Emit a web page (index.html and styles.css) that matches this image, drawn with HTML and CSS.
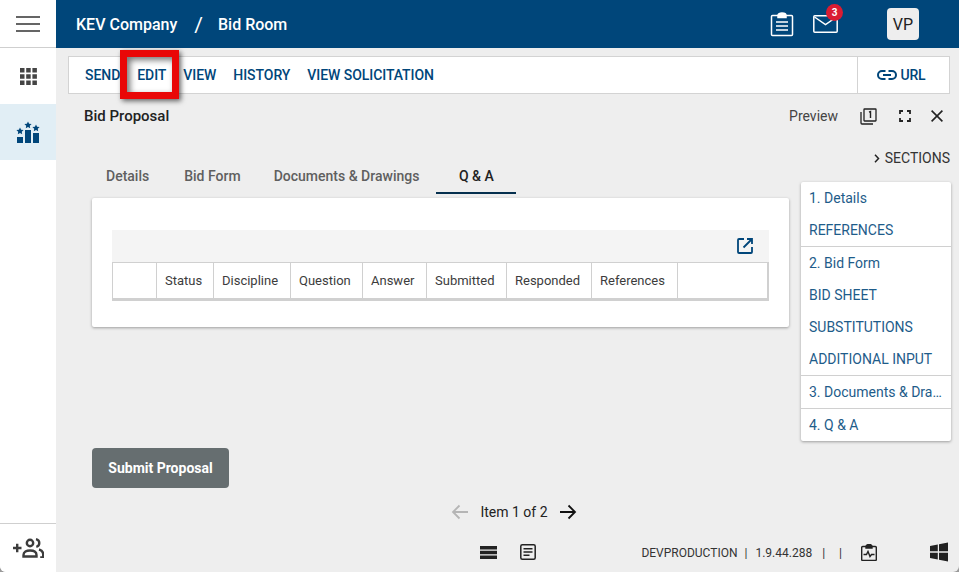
FILE: index.html
```html
<!DOCTYPE html>
<html lang="en">
<head>
<meta charset="utf-8">
<title>Bid Room</title>
<link rel="stylesheet" href="styles.css">
</head>
<body>
<div class="app">
  <aside class="rail">
    <div class="rail-menu">
      <svg class="i-burger" viewBox="0 0 24 16" width="24" height="16"><path d="M0 1h24M0 8h24M0 15h24" stroke="#333" stroke-width="1.6" fill="none"/></svg>
    </div>
    <div class="rail-apps">
      <svg viewBox="0 0 17 17" width="17" height="17" fill="#444"><path d="M0 0h4.5v4.5H0zM6.2 0h4.5v4.5H6.2zM12.4 0h4.5v4.5h-4.5zM0 6.2h4.5v4.5H0zM6.2 6.2h4.5v4.5H6.2zM12.4 6.2h4.5v4.5h-4.5zM0 12.4h4.5v4.5H0zM6.2 12.4h4.5v4.5H6.2zM12.4 12.4h4.5v4.5h-4.5z"/></svg>
    </div>
    <div class="rail-active">
      <svg viewBox="0 0 24 23" width="24" height="23" fill="#00467a"><path d="M1 16h6v6H1zM9 9h6v13H9zM17 12h6v10h-6z"/><path d="M12 .5l1.100 2.300 2.500.3-1.800 1.700.4 2.500L12 6.100 9.800 7.300l.4-2.500-1.800-1.700 2.500-.3zM4 6.500l1.100 2.300 2.500.3-1.800 1.700.4 2.500L4 12.100l-2.200 1.200.4-2.500L.4 9.100l2.500-.3zM20 3.500l1.100 2.300 2.500.3-1.800 1.700.4 2.500L20 9.100l-2.200 1.200.4-2.500-1.800-1.700 2.500-.3z"/></svg>
    </div>
    <div class="rail-fill"></div>
    <div class="rail-foot">
      <svg viewBox="0 0 31 20" width="31" height="20"><path d="M0 10h8.500M4.200 5.800v8.500" stroke="#3c3c3c" stroke-width="2.400" fill="none"/><circle cx="17" cy="5" r="3.200" fill="none" stroke="#3c3c3c" stroke-width="2.400"/><path d="M10.500 18.500v-1.500c0-3 3-4.500 6.500-4.500s6.500 1.500 6.500 4.500v1.500z" fill="none" stroke="#3c3c3c" stroke-width="2.400"/><path d="M23 1.200c2.300.5 3.300 2 3.300 3.800s-1 3.300-3 3.800M26 11.500c3 .8 4.200 2.500 4.200 5v3h-3" fill="none" stroke="#3c3c3c" stroke-width="2.400"/></svg>
    </div>
  </aside>
  <div class="main">
    <header class="topbar">
      <div class="crumbs"><span>KEV Company</span><span class="slash">/</span><span>Bid Room</span></div>
      <div class="top-icons">
        <svg class="i-clip" viewBox="0 0 24 25" width="24" height="25" fill="none" stroke="#fff" stroke-width="1.500"><path d="M8 3.500H2.500a1 1 0 0 0-1 1v18a1 1 0 0 0 1 1h19a1 1 0 0 0 1-1v-18a1 1 0 0 0-1-1H16"/><path d="M8 5.500V3.500a4 2.500 0 0 1 8 0v2z" fill="#fff"/><path d="M6 10h12M6 14h12M6 18h12"/></svg>
        <div class="mail">
          <svg viewBox="0 0 25 18" width="25" height="18" fill="none" stroke="#fff" stroke-width="1.500"><rect x=".8" y=".8" width="23.400" height="16.400" rx="1"/><path d="M1.500 2l11 7.500 11-7.500"/></svg>
          <span class="badge">3</span>
        </div>
        <div class="avatar">VP</div>
      </div>
    </header>
    <div class="content">
      <nav class="toolbar">
        <div class="tool-links">
          <a>SEND</a><a>EDIT</a><a>VIEW</a><a>HISTORY</a><a>VIEW SOLICITATION</a>
        </div>
        <div class="url-btn">
          <svg viewBox="0 0 20 10" width="20" height="10" fill="none" stroke="#00467a" stroke-width="2"><path d="M8.500 1H5a4 4 0 0 0 0 8h3.500M11.500 1H15a4 4 0 0 1 0 8h-3.500M6 5h8"/></svg>
          <span>URL</span>
        </div>
      </nav>
      <div class="title-row">
        <h1>Bid Proposal</h1>
        <div class="title-actions">
          <span class="preview">Preview</span>
          <svg viewBox="0 0 17 17" width="17" height="17" fill="none" stroke="#222" stroke-width="1.300"><rect x="4" y="1" width="12" height="12" rx=".5"/><path d="M1 4v11a1 1 0 0 0 1 1h11"/><path d="M9 4.200l1.500-.7V10" stroke-width="1.400"/></svg>
          <svg class="act-full" viewBox="0 0 12 12" width="12" height="12" fill="none" stroke="#222" stroke-width="1.800"><path d="M1 4V1h3M8 1h3v3M11 8v3H8M4 11H1V8"/></svg>
          <svg class="act-close" viewBox="0 0 12 12" width="12" height="12" fill="none" stroke="#222" stroke-width="1.600"><path d="M.6.6l10.800 10.800M11.400.6L.6 11.400"/></svg>
        </div>
      </div>
      <div class="work">
        <div class="left">
          <div class="tabs">
            <span class="tab tab-details">Details</span>
            <span class="tab tab-form">Bid Form</span>
            <span class="tab tab-docs">Documents &amp; Drawings</span>
            <span class="tab tab-qa">Q &amp; A</span>
          </div>
          <section class="card">
            <div class="grid-bar">
              <svg viewBox="0 0 16 16" width="16" height="16" fill="none" stroke="#00467a" stroke-width="1.800"><path d="M7 1H2a1 1 0 0 0-1 1v12a1 1 0 0 0 1 1h12a1 1 0 0 0 1-1V9"/><path d="M10 1h5v5M15 1L6.500 9.500"/></svg>
            </div>
            <div class="grid-head">
              <div class="cell"></div>
              <div class="cell up">Status</div>
              <div class="cell up">Discipline</div>
              <div class="cell">Question</div>
              <div class="cell">Answer</div>
              <div class="cell">Submitted</div>
              <div class="cell">Responded</div>
              <div class="cell">References</div>
              <div class="cell"></div>
            </div>
          </section>
          <button class="submit" type="button">Submit Proposal</button>
        </div>
        <div class="right">
          <div class="sec-toggle">
            <svg viewBox="0 0 6 9" width="6" height="9" fill="none" stroke="#222" stroke-width="1.500"><path d="M1 .8l3.500 3.700L1 8.200"/></svg>
            <span>SECTIONS</span>
          </div>
          <div class="sections">
            <div class="sec-group"><a>1. Details</a><a>REFERENCES</a></div>
            <div class="sec-group"><a>2. Bid Form</a><a>BID SHEET</a><a>SUBSTITUTIONS</a><a>ADDITIONAL INPUT</a></div>
            <div class="sec-group"><a>3. Documents &amp; Dra…</a></div>
            <div class="sec-group"><a>4. Q &amp; A</a></div>
          </div>
        </div>
      </div>
      <div class="pager">
        <svg viewBox="0 0 18 16" width="18" height="16" fill="none" stroke="#b5b5b5" stroke-width="1.800"><path d="M17 8H2M8.500 1.500L2 8l6.500 6.500"/></svg>
        <span>Item 1 of 2</span>
        <svg viewBox="0 0 18 16" width="18" height="16" fill="none" stroke="#111" stroke-width="1.800"><path d="M1 8h15M9.500 1.500L16 8l-6.500 6.500"/></svg>
      </div>
      <footer class="foot">
        <div class="foot-center">
          <svg viewBox="0 0 17 13" width="17" height="13" fill="#222"><path d="M0 0h17v3.500H0zM0 4.800h17v3.500H0zM0 9.500h17V13H0z"/></svg>
          <svg viewBox="0 0 16 16" width="16" height="16" fill="none" stroke="#222" stroke-width="1.500"><rect x=".8" y=".8" width="14.400" height="14.400" rx="1.500"/><path d="M3.500 4.800h9M3.500 8h9M3.500 11.200h6"/></svg>
        </div>
        <div class="foot-right">
          <span class="env">DEVPRODUCTION</span><span class="bar bar-first">|</span><span class="ver">1.9.44.288</span><span class="bar bar-mid">|</span><span class="bar bar2">|</span>
          <svg class="f-pulse" viewBox="0 0 16 17" width="16" height="17" fill="none" stroke="#222" stroke-width="1.400"><path d="M5 2.500H1.700a1 1 0 0 0-1 1v12a1 1 0 0 0 1 1h12.600a1 1 0 0 0 1-1v-12a1 1 0 0 0-1-1H11"/><path d="M5 4V2.500a3 2 0 0 1 6 0V4z" fill="#222"/><path d="M2.500 10.500h3l1.500-3 2 5 1.500-2h3"/></svg>
          <svg class="f-win" viewBox="0 0 18 20" width="18" height="20" fill="#222"><path d="M0 4l7.800-1.500V9.300H0zM9 2.200L18 .5v8.800H9zM0 10.700h7.800v6.800L0 16zM9 10.700h9v8.800l-9-1.700z"/></svg>
        </div>
      </footer>
    </div>
  </div>
</div>
<div class="highlight"></div>
</body>
</html>
```
FILE: styles.css
```css
* { box-sizing: border-box; }
html, body { margin: 0; height: 100%; }
body {
  font-family: Roboto, "Liberation Sans", sans-serif;
  background: #9a9a9a;
  overflow: hidden;
  position: relative;
}
.app {
  display: flex;
  width: 959px;
  height: 572px;
  background: #eeeeee;
  border-radius: 0 0 6px 6px;
  overflow: hidden;
}
.rail {
  width: 56px;
  flex: none;
  display: flex;
  flex-direction: column;
  background: #fff;
}
.rail-menu {
  height: 48px;
  border-bottom: 1px solid #cfcfcf;
  display: flex;
  align-items: center;
  justify-content: center;
}
.rail-apps {
  height: 56px;
  display: flex;
  align-items: center;
  justify-content: center;
}
.rail-active {
  height: 56px;
  background: #e1eef5;
  display: flex;
  align-items: center;
  justify-content: center;
}
.rail-fill { flex: 1; }
.rail-foot {
  height: 49px;
  border-top: 1px solid #cfcfcf;
  display: flex;
  align-items: center;
  justify-content: center;
}
.main {
  flex: 1;
  display: flex;
  flex-direction: column;
  min-width: 0;
}
.topbar {
  height: 48px;
  flex: none;
  background: #00467a;
  color: #fff;
  display: flex;
  align-items: center;
  justify-content: space-between;
  padding: 0 40px 0 20px;
}
.crumbs {
  display: flex;
  align-items: center;
  padding-top: 1px;
  font-size: 16px;
  font-weight: 500;
}
.slash { font-size: 21px; font-weight: 400; margin: 0 15px 0 17px; }
.top-icons { display: flex; align-items: center; }
.i-clip { margin-right: 19px; }
.mail { position: relative; display: flex; margin-right: 49px; }
.badge {
  position: absolute;
  top: -11px;
  right: -5px;
  width: 17px;
  height: 17px;
  border-radius: 50%;
  background: #da1c32;
  color: #fff;
  font-size: 10px;
  font-weight: 700;
  display: flex;
  align-items: center;
  justify-content: center;
}
.avatar {
  width: 32px;
  height: 32px;
  border-radius: 4px;
  background: #eeeeee;
  color: #222;
  font-size: 16px;
  font-weight: 400;
  display: flex;
  align-items: center;
  justify-content: center;
}
.content {
  flex: 1;
  display: flex;
  flex-direction: column;
  min-height: 0;
}
.toolbar {
  height: 38px;
  margin: 8px 9px 0 12px;
  background: #fff;
  border: 1px solid #d3d3d3;
  display: flex;
  justify-content: space-between;
  flex: none;
}
.tool-links {
  display: flex;
  align-items: center;
  gap: 17px;
  padding-left: 16px;
  font-size: 14px;
  font-weight: 500;
  letter-spacing: -.06px;
  color: #00467a;
}
.url-btn {
  width: 92px;
  padding-right: 5px;
  border-left: 1px solid #d3d3d3;
  display: flex;
  align-items: center;
  justify-content: center;
  gap: 4px;
  font-size: 14px;
  font-weight: 500;
  letter-spacing: -.2px;
  color: #00467a;
}
.title-row {
  height: 44px;
  flex: none;
  display: flex;
  align-items: center;
  justify-content: space-between;
  padding: 0 16px 0 28px;
}
h1 {
  margin: 0;
  font-size: 15px;
  font-weight: 500;
  color: #222;
}
.title-actions { display: flex; align-items: center; }
.preview { font-size: 14px; color: #444; margin-right: 22px; }
.act-full { margin-left: 22px; }
.act-close { margin-left: 20px; }
.work {
  flex: none;
  height: 346px;
  display: flex;
  padding-left: 36px;
}
.left { width: 697px; flex: none; }
.tabs {
  height: 56px;
  display: flex;
  align-items: flex-end;
  font-size: 14px;
  font-weight: 500;
  color: #5f5f5f;
}
.tab { height: 36px; padding-top: 9px; line-height: 18px; }
.tab-details { margin-left: 14px; }
.tab-form { margin-left: 35px; }
.tab-docs { margin-left: 33px; }
.tab-qa {
  margin-left: 17px;
  width: 80px;
  text-align: center;
  color: #222;
  border-bottom: 2px solid #06304f;
}
.card {
  background: #fff;
  height: 129px;
  margin-top: 4px;
  padding: 32px 20px 0;
  border-radius: 2px;
  box-shadow: 0 1px 3px rgba(0,0,0,.35);
}
.grid-bar {
  height: 32px;
  background: #f4f4f4;
  display: flex;
  align-items: center;
  justify-content: flex-end;
  padding-right: 16px;
}
.grid-head {
  display: grid;
  grid-template-columns: 44px 57px 77px 72px 64px 80px 85px 86px 1fr;
  height: 39px;
  border: 1px solid #d0d0d0;
  border-bottom: 3px solid #d0d0d0;
  border-right-width: 2px;
  font-size: 13px;
  color: #3c3c3c;
  background: #fff;
}
.cell {
  border-right: 1px solid #d0d0d0;
  display: flex;
  align-items: center;
  padding-left: 8px;
}
.cell:last-child { border-right: 0; }
.up { padding-bottom: 1px; }
.submit {
  display: block;
  width: 137px;
  height: 40px;
  margin-top: 121px;
  background: #666e70;
  color: #fff;
  border: 0;
  border-radius: 4px;
  font: 700 14px Roboto, "Liberation Sans", sans-serif;
}
.right { width: 150px; margin-left: 12px; flex: none; }
.sec-toggle {
  height: 44px;
  margin-right: 1px;
  padding-top: 12px;
  display: flex;
  align-items: flex-start;
  justify-content: flex-end;
  gap: 5px;
  font-size: 14px;
  color: #333;
}
.sec-toggle svg { margin-top: 4px; }
.sections {
  background: #fff;
  border-radius: 2px;
  box-shadow: 0 1px 3px rgba(0,0,0,.35);
  font-size: 14px;
  color: #1e5c8a;
}
.sec-group { border-bottom: 1px solid #d0d0d0; }
.sec-group:last-child { border-bottom: 0; }
.sec-group a {
  display: block;
  height: 32px;
  line-height: 32px;
  padding: 0 8px;
  white-space: nowrap;
}
.pager {
  height: 28px;
  flex: none;
  display: flex;
  align-items: center;
  justify-content: center;
  gap: 11px;
  font-size: 14px;
  color: #222;
  margin-top: 14px;
  padding-left: 13px;
}
.foot {
  flex: 1;
  display: flex;
  align-items: center;
  padding-top: 6px;
}
.foot-center {
  display: flex;
  align-items: center;
  gap: 23px;
  margin-left: 424px;
}
.foot-right {
  display: flex;
  align-items: center;
  margin-left: auto;
  padding-right: 11px;
  font-size: 12px;
  color: #333;
}
.env, .ver, .bar { margin-top: 2px; }
.bar { margin-left: 8px; margin-right: 8px; }
.bar-first { margin-left: 7px; }
.bar-mid { margin-left: 10px; }
.bar2 { margin-left: 6px; margin-right: 0; }
.f-pulse { margin-left: 19px; }
.f-win { margin-left: 53px; }
.highlight {
  position: absolute;
  left: 120px;
  top: 50px;
  width: 59px;
  height: 49px;
  border: 7px solid #e90707;
  box-shadow: 2px 2px 5px rgba(0,0,0,.6), inset 3px 3px 6px rgba(0,0,0,.55);
}
```
